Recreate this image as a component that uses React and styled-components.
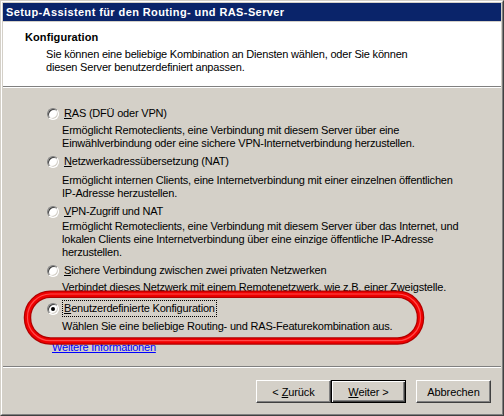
import React from 'react';
import styled, { createGlobalStyle, css } from 'styled-components';

const Global = createGlobalStyle`
  html, body { margin: 0; padding: 0; background: #D4D0C8; }
  body { font-family: "Liberation Sans", Arial, sans-serif; font-size: 11px; color: #000; letter-spacing: -0.2px; }
  #root { width: 504px; height: 416px; }
`;

const Window = styled.div`
  position: relative;
  width: 504px;
  height: 416px;
  box-sizing: border-box;
  border: 1px solid;
  border-color: #D4D0C8 #404040 #404040 #D4D0C8;
  background: #D4D0C8;
`;

const Frame = styled.div`
  height: 100%;
  box-sizing: border-box;
  border: 1px solid;
  border-color: #fff #808080 #808080 #fff;
  padding: 1px;
  display: flex;
  flex-direction: column;
`;

const TitleBar = styled.div`
  height: 18px;
  flex: none;
  margin-bottom: 1px;
  background: #0A246A;
  color: #fff;
  font-family: "Liberation Sans", Arial, sans-serif;
  font-weight: bold;
  font-size: 11px;
  letter-spacing: 0.4px;
  display: flex;
  align-items: center;
  padding-left: 3px;
  white-space: nowrap;
`;

const Client = styled.div`
  flex: 1;
  display: flex;
  flex-direction: column;
  min-height: 0;
`;

const Header = styled.div`
  height: 64px;
  flex: none;
  box-sizing: border-box;
  background: #fff;
  padding: 9px 0 0 22px;
`;

const HeaderTitle = styled.div`
  font-weight: bold;
  line-height: 13px;
  letter-spacing: 0.1px;
`;

const HeaderText = styled.div`
  margin: 4px 0 0 21px;
  line-height: 13px;
  white-space: nowrap;
`;

const Separator = styled.div`
  height: 0;
  flex: none;
  border-top: 1px solid #808080;
  border-bottom: 1px solid #fff;
`;

const Body = styled.div`
  flex: 1;
  padding: 17px 0 0 44px;
  display: flex;
  flex-direction: column;
`;

const Option = styled.div`
  margin-top: ${p => p.$gap}px;
  display: flex;
  flex-direction: column;
`;

const OptionRow = styled.div`
  display: flex;
  align-items: center;
  height: 17px;
`;

const Radio = styled.span`
  position: relative;
  flex: none;
  width: 12px;
  height: 12px;
  box-sizing: border-box;
  border-radius: 50%;
  background: #fff;
  border: 1px solid;
  border-color: #808080 #fff #fff #808080;
  box-shadow: inset 1px 1px #404040, inset -1px -1px #D4D0C8;
  margin-right: 3px;
  ${p => p.$checked && css`
    &::after {
      content: '';
      position: absolute;
      left: 3px;
      top: 3px;
      width: 4px;
      height: 4px;
      border-radius: 50%;
      background: #000;
    }
  `}
`;

const Label = styled.span`
  padding: 1px;
  line-height: 13px;
  border: 1px dotted ${p => (p.$focused ? '#000' : 'transparent')};
  white-space: nowrap;
`;

const Desc = styled.div`
  margin: ${p => p.$gap}px 0 0 15px;
  line-height: 13px;
  white-space: nowrap;
`;

const MoreLink = styled.a`
  margin: 8px 0 0 5px;
  line-height: 13px;
  color: #0000FF;
  text-decoration: underline;
  align-self: flex-start;
  cursor: pointer;
`;

const Footer = styled.div`
  height: 45px;
  flex: none;
  box-sizing: border-box;
  padding: 12px 10px 10px 0;
  display: flex;
  justify-content: flex-end;
`;

const Button = styled.button`
  width: 75px;
  height: 23px;
  box-sizing: border-box;
  margin-left: ${p => p.$gap || 0}px;
  padding: 0;
  font-family: "Liberation Sans", Arial, sans-serif;
  font-size: 11px;
  letter-spacing: -0.1px;
  color: #000;
  background: #D4D0C8;
  border: 1px solid;
  border-color: #fff #404040 #404040 #fff;
  box-shadow: inset -1px -1px #808080;
  ${p => p.$default && css`
    border-color: #000;
    box-shadow: inset 1px 1px #fff, inset -1px -1px #404040, inset -2px -2px #808080;
  `}
`;

const Overlay = styled.svg`
  position: absolute;
  left: 0;
  top: 0;
  pointer-events: none;
`;

const options = [
  {
    gap: 0, descGap: 2, key: 'R', rest: 'AS (DFÜ oder VPN)',
    lines: [
      'Ermöglicht Remoteclients, eine Verbindung mit diesem Server über eine',
      'Einwählverbindung oder eine sichere VPN-Internetverbindung herzustellen.',
    ],
  },
  {
    gap: 3, descGap: 4, key: 'N', rest: 'etzwerkadressübersetzung (NAT)',
    lines: [
      'Ermöglicht internen Clients, eine Internetverbindung mit einer einzelnen öffentlichen',
      'IP-Adresse herzustellen.',
    ],
  },
  {
    gap: 3, descGap: 0, key: 'V', rest: 'PN-Zugriff und NAT',
    lines: [
      'Ermöglicht Remoteclients, eine Verbindung mit diesem Server über das Internet, und',
      'lokalen Clients eine Internetverbindung über eine einzige öffentliche IP-Adresse',
      'herzustellen.',
    ],
  },
  {
    gap: 3, descGap: 2, key: 'S', rest: 'ichere Verbindung zwischen zwei privaten Netzwerken',
    lines: ['Verbindet dieses Netzwerk mit einem Remotenetzwerk, wie z.B. einer Zweigstelle.'],
  },
  {
    gap: 6, descGap: 3, key: 'B', rest: 'enutzerdefinierte Konfiguration', checked: true,
    lines: ['Wählen Sie eine beliebige Routing- und RAS-Featurekombination aus.'],
  },
];

export default function App() {
  return (
    <>
      <Global />
      <Window>
        <Frame>
          <TitleBar>Setup-Assistent für den Routing- und RAS-Server</TitleBar>
          <Client>
            <Header>
              <HeaderTitle>Konfiguration</HeaderTitle>
              <HeaderText>
                Sie können eine beliebige Kombination an Diensten wählen, oder Sie können
                <br />
                diesen Server benutzerdefiniert anpassen.
              </HeaderText>
            </Header>
            <Separator />
            <Body>
              {options.map(o => (
                <Option key={o.rest} $gap={o.gap}>
                  <OptionRow>
                    <Radio $checked={o.checked} />
                    <Label $focused={o.checked}>
                      <u>{o.key}</u>{o.rest}
                    </Label>
                  </OptionRow>
                  <Desc $gap={o.descGap}>
                    {o.lines.map((l, i) => (
                      <React.Fragment key={i}>
                        {i > 0 && <br />}
                        {l}
                      </React.Fragment>
                    ))}
                  </Desc>
                </Option>
              ))}
              <MoreLink>Weitere Informationen</MoreLink>
            </Body>
            <Separator />
            <Footer>
              <Button>&lt; <u>Z</u>urück</Button>
              <Button $default><u>W</u>eiter &gt;</Button>
              <Button $gap={10}>Abbrechen</Button>
            </Footer>
          </Client>
        </Frame>
        <Overlay width="504" height="416" viewBox="0 0 504 416">
          <rect x="26.5" y="293.3" width="393" height="46.7" rx="23" ry="23" fill="none" stroke="#B00000" strokeWidth="7.5" />
          <rect x="26.5" y="293.3" width="393" height="46.7" rx="23" ry="23" fill="none" stroke="#F00000" strokeWidth="5" />
          <rect x="26.5" y="293" width="393" height="46.7" rx="23" ry="23" fill="none" stroke="#FF4a4a" strokeWidth="1.2" />
        </Overlay>
      </Window>
    </>
  );
}
